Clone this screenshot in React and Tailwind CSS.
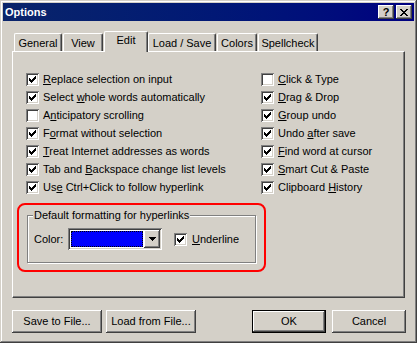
const LEFT = [
  ['~Replace selection on input', true],
  ['Select ~whole words automatically', true],
  ['A~nticipatory scrolling', false],
  ['F~ormat without selection', true],
  ['~Treat Internet addresses as words', true],
  ['Tab and ~Backspace change list levels', true],
  ['Us~e Ctrl+Click to follow hyperlink', true],
]

const RIGHT = [
  ['~Click & Type', false],
  ['~Drag & Drop', true],
  ['~Group undo', true],
  ['Undo ~after save', true],
  ['~Find word at cursor', true],
  ['~Smart Cut & Paste', true],
  ['Clipboard ~History', true],
]

const TABS = [
  { label: 'General', w: 'w-[48px]', ml: 'ml-0' },
  { label: 'View', w: 'w-[40px]', ml: 'ml-[1px]' },
  { label: 'Edit', w: 'w-[44px]', ml: 'ml-[1px]', active: true },
  { label: 'Load / Save', w: 'w-[68px]', ml: 'ml-0' },
  { label: 'Colors', w: 'w-[40px]', ml: 'ml-[1px]' },
  { label: 'Spellcheck', w: 'w-[60px]', ml: 'ml-[1px]' },
]

const raised = 'bg-[#d4d0c8] shadow-[inset_-1px_-1px_#404040,inset_1px_1px_#ffffff,inset_-2px_-2px_#808080]'
const sunken = 'bg-white shadow-[inset_1px_1px_#808080,inset_-1px_-1px_#ffffff,inset_2px_2px_#404040,inset_-2px_-2px_#d4d0c8]'

// text with ~ before the access key letter
function Mn({ text }) {
  const i = text.indexOf('~')
  if (i < 0) return text
  return (
    <>
      {text.slice(0, i)}
      <u>{text[i + 1]}</u>
      {text.slice(i + 2)}
    </>
  )
}

function Check({ on }) {
  return (
    <span className={`w-[13px] h-[13px] shrink-0 flex items-center justify-center ${sunken}`}>
      {on && (
        <svg width="7" height="7" viewBox="0 0 7 7" shapeRendering="crispEdges">
          {[2, 3, 4, 3, 2, 1, 0].map((y, x) => (
            <rect key={x} x={x} y={y} width="1" height="3" fill="#000" />
          ))}
        </svg>
      )}
    </span>
  )
}

function CheckRow({ text, on }) {
  return (
    <div className="flex items-center h-[13px] gap-[4px] whitespace-nowrap">
      <Check on={on} />
      <span><Mn text={text} /></span>
    </div>
  )
}

function Btn({ children, className = '' }) {
  return (
    <button className={`h-[23px] flex items-center justify-center ${raised} ${className}`}>
      {children}
    </button>
  )
}

function CloseGlyph() {
  const rows = [[0, 6], [1, 5], [2, 4], [3, 3], [2, 4], [1, 5], [0, 6]]
  return (
    <svg width="8" height="7" viewBox="0 0 8 7" shapeRendering="crispEdges">
      {rows.map(([a, b], y) => (
        <g key={y}>
          <rect x={a} y={y} width="2" height="1" fill="#000" />
          <rect x={b} y={y} width="2" height="1" fill="#000" />
        </g>
      ))}
    </svg>
  )
}

export default function App() {
  return (
    <div className="w-[417px] h-[343px] bg-[#d4d0c8] p-[3px] flex flex-col font-['Liberation_Sans',Arial,sans-serif] text-[11px] leading-[13px] text-black shadow-[inset_-1px_-1px_#404040,inset_1px_1px_#d4d0c8,inset_-2px_-2px_#808080,inset_2px_2px_#ffffff] overflow-hidden">

      {/* Title bar */}
      <div className="h-[18px] shrink-0 flex items-center justify-between pl-[2px] pr-[2px] bg-linear-to-r from-[#0a246a] to-[#000080]">
        <span className="text-white font-bold text-[11px] leading-[13px]">Options</span>
        <div className="flex gap-[2px]">
          <span className={`w-[16px] h-[14px] flex items-center justify-center font-bold text-[11px] leading-none pt-[1px] ${raised}`}>?</span>
          <span className={`w-[16px] h-[14px] flex items-center justify-center ${raised}`}>
            <CloseGlyph />
          </span>
        </div>
      </div>

      <div className="px-[9px] pt-[10px] flex flex-col">
        {/* Tabs */}
        <div className="flex items-end h-[20px] pl-[2px]">
          {TABS.map(t => (
            <div
              key={t.label}
              className={`${t.w} ${t.ml} flex items-center justify-center border-l border-t border-r border-white border-r-[#404040] shadow-[inset_-1px_0_#808080] rounded-tl-[2px] rounded-tr-[2px] ${t.active ? 'h-[21px] -mb-[1px] relative z-10 bg-[#d4d0c8] pb-[3px]' : 'h-[18px] pt-[1px]'}`}
            >
              {t.label}
            </div>
          ))}
        </div>

        {/* Panel */}
        <div className="h-[247px] border border-white border-r-[#404040] border-b-[#404040] shadow-[inset_-1px_-1px_#808080] pt-[21px]">
          <div className="flex">
            <div className="ml-[13px] w-[235px] flex flex-col gap-[5px]">
              {LEFT.map(([t, on]) => <CheckRow key={t} text={t} on={on} />)}
            </div>
            <div className="flex flex-col gap-[5px]">
              {RIGHT.map(([t, on]) => <CheckRow key={t} text={t} on={on} />)}
            </div>
          </div>

          {/* highlighted group */}
          <div className="mt-[9px] ml-[4px] w-[249px] h-[69px] border-2 border-[#ff0000] rounded-[8px] pt-[10px] pl-[8px]">
            <div className="relative w-[229px] h-[48px] border border-[#808080] shadow-[1px_1px_0_#ffffff,inset_1px_1px_0_#ffffff]">
              <span className="absolute left-[5px] -top-[7px] px-[1px] bg-[#d4d0c8] whitespace-nowrap">
                Default formatting for hyperlinks
              </span>
              <div className="flex items-center pt-[12px] pl-[6px]">
                <span className="w-[34px]">Color:</span>
                <div className={`w-[94px] h-[22px] p-[2px] flex ${sunken}`}>
                  <div className="w-[74px] h-[18px] p-[1px]">
                    <div className="w-full h-full border border-dotted border-black bg-[#0000ff]" />
                  </div>
                  <div className={`w-[16px] h-[18px] flex items-center justify-center ${raised}`}>
                    <svg width="7" height="4" viewBox="0 0 7 4" shapeRendering="crispEdges">
                      <rect x="0" y="0" width="7" height="1" fill="#000" />
                      <rect x="1" y="1" width="5" height="1" fill="#000" />
                      <rect x="2" y="2" width="3" height="1" fill="#000" />
                      <rect x="3" y="3" width="1" height="1" fill="#000" />
                    </svg>
                  </div>
                </div>
                <div className="ml-[12px] flex items-center gap-[5px]">
                  <Check on />
                  <span><Mn text="~Underline" /></span>
                </div>
              </div>
            </div>
          </div>
        </div>

        {/* Bottom buttons */}
        <div className="mt-[12px] flex pr-[0px]">
          <Btn className="w-[90px]">Save to File...</Btn>
          <Btn className="w-[90px] ml-[4px]">Load from File...</Btn>
          <div className="flex-1" />
          <div className="w-[74px] h-[23px] border border-black flex">
            <Btn className="w-full h-full">OK</Btn>
          </div>
          <Btn className="w-[74px] ml-[6px] -mr-[1px]">Cancel</Btn>
        </div>
      </div>
    </div>
  )
}
